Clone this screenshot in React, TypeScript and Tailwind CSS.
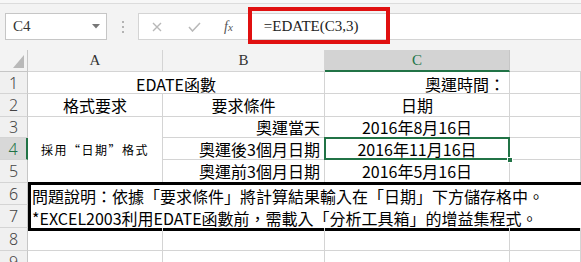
import React from "react";

const cjk = "font-['Noto_Sans_CJK_TC','Noto_Sans_CJK_SC',sans-serif]";

function RowHead({ n, sel = false }: { n: string; sel?: boolean }) {
  return (
    <div
      className={
        sel
          ? "flex items-center justify-center bg-[#d8d8d8] border-b border-[#d4d4d4] border-r-2 border-r-[#217346] text-[#217346] text-[16px] font-['Noto_Sans',sans-serif] font-light leading-none"
          : "flex items-center justify-center bg-[#f0f0f0] border-b border-[#d4d4d4] border-r border-r-[#c6c6c6] text-[#444] text-[16px] font-['Noto_Sans',sans-serif] font-light leading-none"
      }
    >
      {n}
    </div>
  );
}

function Cell({
  children,
  align = "center",
  className = "",
}: {
  children?: React.ReactNode;
  align?: "center" | "right" | "left";
  className?: string;
}) {
  const a =
    align === "center" ? "justify-center" : align === "right" ? "justify-end pr-[4px]" : "justify-start pl-[3px]";
  return (
    <div
      className={`flex items-center ${a} border-r border-b border-[#d4d4d4] leading-none text-black whitespace-nowrap ${cjk} ${className}`}
    >
      {children}
    </div>
  );
}

export default function App() {
  return (
    <div className="w-[581px] h-[262px] overflow-hidden bg-white relative">
      {/* toolbar */}
      <div className="h-[50px] bg-[#f3f3f3] flex flex-col">
        <div className="h-[3px] bg-[#f7f7f7]" />
        <div className="h-px bg-[#dcdcdc]" />
        <div className="h-[9px]" />
        <div className="flex items-center h-[27px]">
          <div className="ml-[5px] w-[102px] h-[27px] bg-white border border-[#c6c6c6] flex items-center pl-[7px] pr-[6px] justify-between">
            <span className="font-['Liberation_Serif',serif] text-[15px] text-[#333] leading-none">C4</span>
            <svg width="8" height="5" viewBox="0 0 8 5">
              <path d="M0 0 L8 0 L4 4.5 Z" fill="#777" />
            </svg>
          </div>
          <div className="w-[31px] flex flex-col items-center gap-[3px]">
            <span className="w-[2px] h-[2px] bg-[#b3b3b3]" />
            <span className="w-[2px] h-[2px] bg-[#b3b3b3]" />
            <span className="w-[2px] h-[2px] bg-[#b3b3b3]" />
          </div>
          <div className="flex-1 h-[27px] bg-white border border-r-0 border-[#d4d4d4] relative flex items-center">
            <svg className="ml-[13px]" width="10" height="10" viewBox="0 0 10 10">
              <path d="M1 1 L9 9 M9 1 L1 9" stroke="#b8b8b8" strokeWidth="1.4" />
            </svg>
            <svg className="ml-[26px]" width="13" height="10" viewBox="0 0 13 10">
              <path d="M1 5 L4.5 9 L12 1" stroke="#b8b8b8" strokeWidth="1.5" fill="none" />
            </svg>
            <span className="ml-[23px] font-['Liberation_Serif',serif] italic text-[14px] text-[#555] leading-none">
              f<span className="text-[11px]">x</span>
            </span>
            <span className="ml-[31px] font-['Liberation_Serif',serif] text-[15px] text-[#222] leading-none">
              =EDATE(C3,3)
            </span>
            <div className="absolute left-[109px] top-[-7px] w-[142px] h-[37px] border-[4px] border-[#e01010]" />
          </div>
        </div>
      </div>

      {/* sheet grid */}
      <div className="grid grid-cols-[28px_135px_162px_185px_71px] grid-rows-[22px_22px_23px_21px_22px_23px_22px_23px_23px_22px]">
        {/* column headers */}
        <div className="bg-[#f3f3f3] border-r border-b border-[#c6c6c6] relative flex items-end justify-end pr-[3px] pb-[3px]">
          <svg width="11" height="13" viewBox="0 0 11 13">
            <path d="M11 0 L11 13 L0 13 Z" fill="#b9b9b9" />
          </svg>
        </div>
        <div className="bg-[#f3f3f3] border-r border-b border-[#d4d4d4] flex items-center justify-center font-['Liberation_Serif',serif] text-[15px] text-[#333] leading-none">A</div>
        <div className="bg-[#f3f3f3] border-r border-b border-[#d4d4d4] flex items-center justify-center font-['Liberation_Serif',serif] text-[15px] text-[#333] leading-none">B</div>
        <div className="bg-[#d3d3d3] border-r border-[#c6c6c6] border-b-2 border-b-[#217346] flex items-center justify-center font-['Liberation_Serif',serif] text-[15px] text-[#217346] leading-none">C</div>
        <div className="bg-[#f3f3f3] border-b border-[#d4d4d4]" />

        {/* row 1 */}
        <RowHead n="1" />
        <Cell className="col-span-2 pt-[2px] text-[16px]">EDATE函數</Cell>
        <Cell align="right" className="pt-[2px] text-[16px]">奧運時間：</Cell>
        <Cell />

        {/* row 2 */}
        <RowHead n="2" />
        <Cell className="text-[16px]">格式要求</Cell>
        <Cell className="text-[16px]">要求條件</Cell>
        <Cell className="text-[16px]">日期</Cell>
        <Cell />

        {/* row 3 */}
        <RowHead n="3" />
        <Cell className="row-span-3 text-[12px] tracking-[1.5px]">採用“日期”格式</Cell>
        <Cell align="right" className="text-[16px]">奧運當天</Cell>
        <Cell className="text-[16px]">2016年8月16日</Cell>
        <Cell />

        {/* row 4 */}
        <RowHead n="4" sel />
        <Cell align="right" className="text-[16px]">奧運後3個月日期</Cell>
        <Cell className="relative text-[16px]">
          2016年11月16日
          <div className="absolute left-[-1px] top-[-1px] right-[-1px] bottom-[-1px] border-2 border-[#217346]" />
          <div className="absolute right-[-4px] bottom-[-4px] w-[6px] h-[6px] bg-[#217346] border border-white" />
        </Cell>
        <Cell />

        {/* row 5 */}
        <RowHead n="5" />
        <Cell align="right" className="text-[16px]">奧運前3個月日期</Cell>
        <Cell className="text-[16px]">2016年5月16日</Cell>
        <Cell />

        {/* rows 6-7 */}
        <RowHead n="6" />
        <div
          className={`col-span-4 row-span-2 -mt-px -mb-[3px] border-t-[3px] border-b-[3px] border-l-[3px] border-black bg-white pl-[1px] text-[16px] leading-[22px] text-black whitespace-nowrap ${cjk}`}
        >
          <div>問題說明：依據「要求條件」將計算結果輸入在「日期」下方儲存格中。</div>
          <div>*EXCEL2003利用EDATE函數前，需載入「分析工具箱」的增益集程式。</div>
        </div>
        <RowHead n="7" />

        {/* row 8 */}
        <RowHead n="8" />
        <Cell />
        <Cell />
        <Cell />
        <Cell />

        {/* row 9 */}
        <RowHead n="9" />
        <Cell />
        <Cell />
        <Cell />
        <Cell />
      </div>
    </div>
  );
}
